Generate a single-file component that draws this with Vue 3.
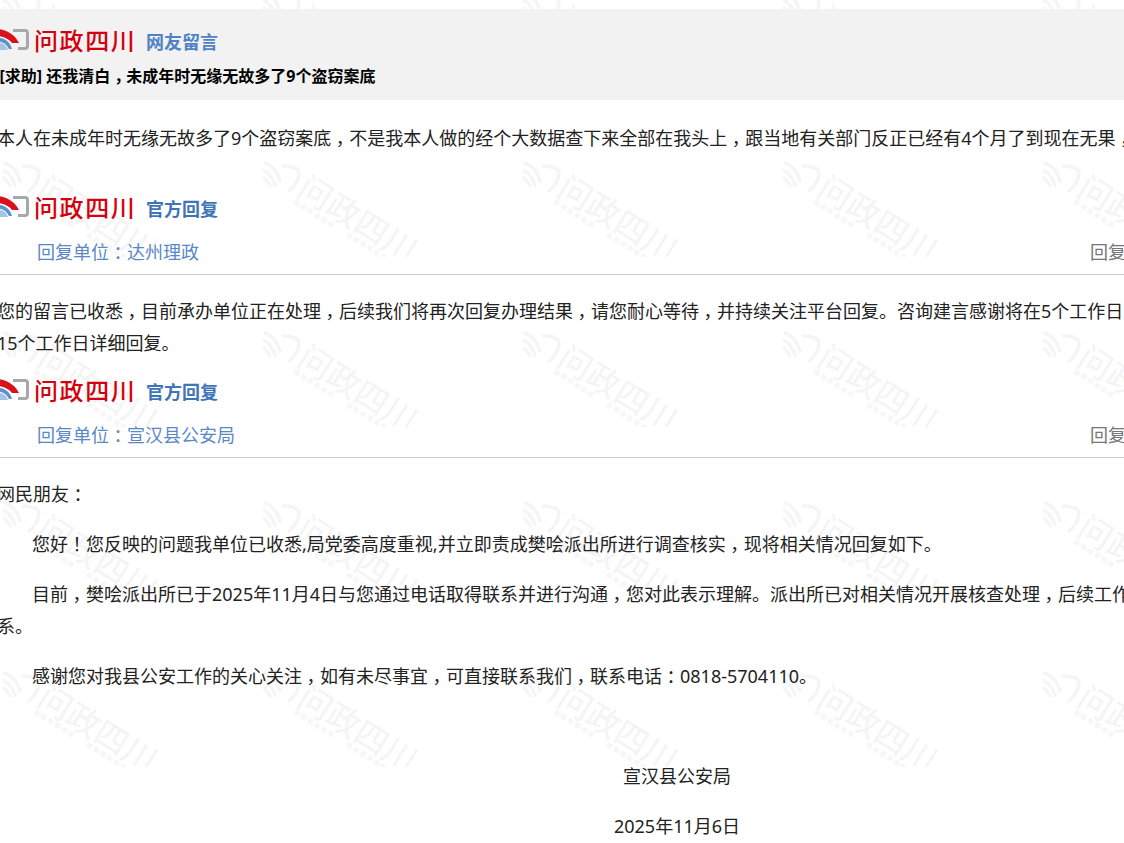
<script setup>
import { h } from 'vue'

const Txt = (props) =>
  props.t.split(/([，：！])/).map((s, i) => (i % 2 ? h('span', { class: 'punct' }, s) : s))
Txt.props = ['t']

const tiles = []
for (let r = 0; r < 5; r++) {
  for (let c = 0; c < 5; c++) {
    tiles.push({ id: `${r}-${c}`, left: `${c * 260 + 3}px`, top: `${r * 170 - 13}px` })
  }
}
const dots = [0, 1, 2, 3, 4, 5]
</script>

<template>
  <div class="viewport">
    <div class="marks" aria-hidden="true">
      <svg
        v-for="t in tiles"
        :key="t.id"
        class="mark"
        :style="{ left: t.left, top: t.top }"
        viewBox="0 0 170 100"
        width="170"
        height="100"
      >
        <g class="mark-icon">
          <path d="M2 6 C8 8 14 14 17 24" />
          <path d="M0 13 C5 15 9 19 12 28" />
          <path d="M0 21 C3 22 5 25 7 29" />
          <path d="M20 9 C28 9 35 11 36 15 C36 22 32 29 26 34" />
        </g>
        <g transform="translate(45 17) rotate(32)">
          <text class="mark-name" x="0" y="24">问政四川</text>
        </g>
        <g class="mark-dots" transform="translate(33 42) rotate(32)">
          <rect v-for="d in dots" :key="d" :x="d * 8" y="0" width="5.5" height="5.5" rx="1" />
          <rect v-for="d in dots" :key="'b' + d" :x="62 + d * 8" y="0" width="5.5" height="5.5" rx="1" />
        </g>
      </svg>
    </div>

    <main class="page">
      <header class="question-head">
        <div class="brand">
          <svg class="logo" viewBox="0 0 30 22" width="30" height="22">
            <path d="M14 1.5 H26 Q28.5 1.5 28.5 4 V17 Q28.5 19.5 26 19.5 H19" fill="none" stroke="#a8a8a8" stroke-width="3" />
            <path d="M0 0 C9 1 17 7 20 14 H13 C10 10 6 8 0 7Z" fill="#d7121a" />
            <path d="M0 9 C6 9 11 13 13 20 H10 C8 16 5 13 0 12.5Z" fill="#5b92cc" />
            <path d="M0 14 C4 14 7 16 9 21 H0Z" fill="#a5c4e4" />
          </svg>
          <span class="brand-name">问政四川</span>
          <strong class="brand-tag soft">网友留言</strong>
        </div>
        <h1 class="title"><Txt t="[求助] 还我清白，未成年时无缘无故多了9个盗窃案底" /></h1>
      </header>

      <p class="question-body"><Txt t="本人在未成年时无缘无故多了9个盗窃案底，不是我本人做的经个大数据查下来全部在我头上，跟当地有关部门反正已经有4个月了到现在无果，" /></p>

      <section class="reply first">
        <div class="brand">
          <svg class="logo" viewBox="0 0 30 22" width="30" height="22">
            <path d="M14 1.5 H26 Q28.5 1.5 28.5 4 V17 Q28.5 19.5 26 19.5 H19" fill="none" stroke="#a8a8a8" stroke-width="3" />
            <path d="M0 0 C9 1 17 7 20 14 H13 C10 10 6 8 0 7Z" fill="#d7121a" />
            <path d="M0 9 C6 9 11 13 13 20 H10 C8 16 5 13 0 12.5Z" fill="#5b92cc" />
            <path d="M0 14 C4 14 7 16 9 21 H0Z" fill="#a5c4e4" />
          </svg>
          <span class="brand-name">问政四川</span>
          <strong class="brand-tag">官方回复</strong>
        </div>
        <div class="reply-meta">
          <span class="unit"><Txt t="回复单位：达州理政" /></span>
          <span class="time">回复时间</span>
        </div>
        <div class="reply-text">
          <p><Txt t="您的留言已收悉，目前承办单位正在处理，后续我们将再次回复办理结果，请您耐心等待，并持续关注平台回复。咨询建言感谢将在5个工作日" /></p>
          <p>15个工作日详细回复。</p>
        </div>
      </section>

      <section class="reply">
        <div class="brand">
          <svg class="logo" viewBox="0 0 30 22" width="30" height="22">
            <path d="M14 1.5 H26 Q28.5 1.5 28.5 4 V17 Q28.5 19.5 26 19.5 H19" fill="none" stroke="#a8a8a8" stroke-width="3" />
            <path d="M0 0 C9 1 17 7 20 14 H13 C10 10 6 8 0 7Z" fill="#d7121a" />
            <path d="M0 9 C6 9 11 13 13 20 H10 C8 16 5 13 0 12.5Z" fill="#5b92cc" />
            <path d="M0 14 C4 14 7 16 9 21 H0Z" fill="#a5c4e4" />
          </svg>
          <span class="brand-name">问政四川</span>
          <strong class="brand-tag">官方回复</strong>
        </div>
        <div class="reply-meta">
          <span class="unit"><Txt t="回复单位：宣汉县公安局" /></span>
          <span class="time">回复时间</span>
        </div>
        <div class="letter">
          <p><Txt t="网民朋友：" /></p>
          <p class="indent"><Txt t="您好！您反映的问题我单位已收悉,局党委高度重视,并立即责成樊哙派出所进行调查核实，现将相关情况回复如下。" /></p>
          <p class="indent tight"><Txt t="目前，樊哙派出所已于2025年11月4日与您通过电话取得联系并进行沟通，您对此表示理解。派出所已对相关情况开展核查处理，后续工作" /></p>
          <p>系。</p>
          <p class="indent"><Txt t="感谢您对我县公安工作的关心关注，如有未尽事宜，可直接联系我们，联系电话：0818-5704110。" /></p>
          <p class="spacer"></p>
          <p class="sign">宣汉县公安局</p>
          <p class="sign">2025年11月6日</p>
        </div>
      </section>
    </main>
  </div>
</template>

<style scoped>
.viewport {
  position: relative;
  width: 1124px;
  height: 843px;
  overflow: hidden;
  background: #fff;
  font-family: "Noto Sans", "Noto Sans CJK SC", "Liberation Sans", sans-serif;
}
.marks {
  position: absolute;
  inset: 0;
}
.mark {
  position: absolute;
}
.mark-icon path {
  fill: none;
  stroke: #f5f5f5;
  stroke-width: 3.5;
  stroke-linecap: round;
}
.mark-name {
  font-family: "Noto Sans CJK SC", sans-serif;
  font-size: 33px;
  fill: #f4f4f4;
}
.mark-dots rect {
  fill: #f7f7f7;
}
.page {
  position: relative;
  width: 1195px;
  margin-left: -3px;
  padding-top: 9px;
  color: #222;
}
p,
h1 {
  margin: 0;
}
.question-head {
  background: #f2f2f2;
  height: 91px;
  box-sizing: border-box;
  padding-top: 17px;
}
.brand {
  display: flex;
  align-items: center;
  height: 28px;
}
.logo {
  flex: none;
  margin-left: 2px;
}
.brand-name {
  margin-left: 5px;
  width: 112px;
  font-family: "Noto Sans CJK SC", sans-serif;
  font-size: 24px;
  letter-spacing: 1.6px;
  line-height: 28px;
  color: #d4000f;
  font-weight: 500;
}
.brand-tag {
  margin-top: 4px;
  font-size: 18px;
  line-height: 28px;
  color: #3f75b8;
  font-weight: 700;
}
.soft {
  color: #4f83c4;
}
.title {
  margin-top: 11px;
  padding-left: 2.5px;
  font-size: 16px;
  line-height: 22px;
  font-weight: 700;
  color: #000;
  white-space: nowrap;
}
.question-body {
  margin-top: 23px;
  font-size: 18px;
  line-height: 30px;
  white-space: nowrap;
}
.reply.first {
  margin-top: 40px;
}
.reply-meta {
  display: flex;
  justify-content: space-between;
  align-items: center;
  height: 47px;
  margin-top: 7px;
  padding-left: 40px;
  font-size: 18px;
  border-bottom: 1px solid #ccc;
  box-sizing: border-box;
}
.unit {
  color: #5a88c7;
}
.time {
  color: #777;
  width: 102px;
  white-space: nowrap;
}
.reply-text {
  height: 81px;
  padding-top: 20px;
  font-size: 18px;
  line-height: 32px;
  white-space: nowrap;
}
.letter {
  padding-top: 20px;
  font-size: 18px;
  line-height: 32px;
}
.letter p {
  white-space: nowrap;
  margin-bottom: 18px;
}
.letter .indent {
  text-indent: 35px;
}
.letter .tight {
  margin-bottom: 0;
}
.spacer {
  height: 32px;
}
.sign {
  text-align: center;
  width: 1360px;
}
</style>

<style>
.punct {
  display: inline-block;
  width: 1em;
  text-align: center;
  text-indent: 0;
  font-feature-settings: "halt";
}
</style>
